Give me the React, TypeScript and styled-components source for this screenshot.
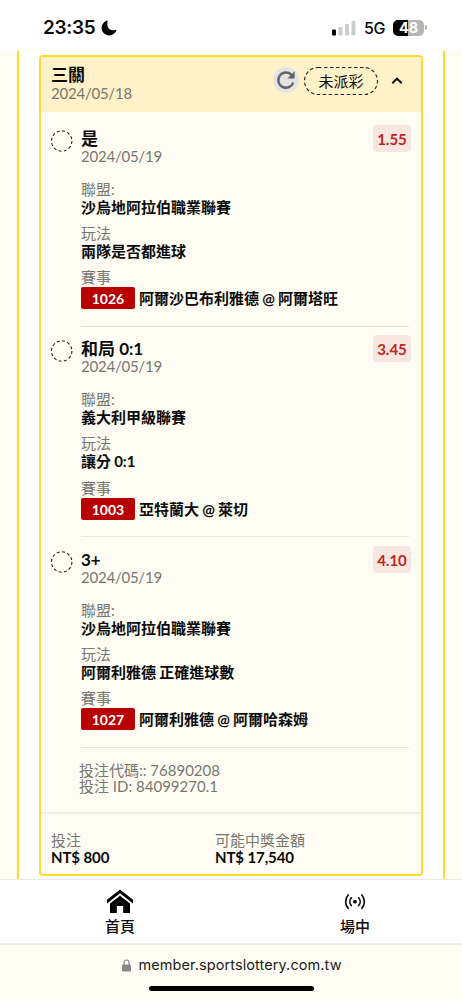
import React from 'react';
import styled, { createGlobalStyle } from 'styled-components';

const GlobalStyle = createGlobalStyle`
  * { box-sizing: border-box; }
  body {
    margin: 0;
    background: #fffdf3;
    color: #0b0b0b;
    font-family: Lato, "Noto Sans CJK TC", sans-serif;
  }
`;

const Screen = styled.div`
  width: 462px;
  height: 1000px;
  display: flex;
  flex-direction: column;
  overflow: hidden;
  background: #fffdf3;
`;

const StatusBar = styled.header`
  height: 51px;
  flex: none;
  display: flex;
  align-items: center;
  justify-content: space-between;
  padding: 4px 35px 0 43px;
  background: #fff;
  font-family: Inter, sans-serif;
`;

const StatusGroup = styled.div`
  display: flex;
  align-items: center;
`;

const Clock = styled.span`
  font-size: 19px;
  font-weight: 600;
  line-height: 25px;
  width: 58px;
  letter-spacing: -0.35px;
  white-space: nowrap;
`;

const Network = styled.span`
  font-size: 16px;
  font-weight: 500;
  width: 22px;
  margin: 1px 7px 0 8px;
  letter-spacing: -0.3px;
`;

const Battery = styled.div`
  width: 31px;
  height: 16px;
  border-radius: 5px;
  background: linear-gradient(90deg, #000 0 48%, #b5b5b5 48%);
  color: #fff;
  font-size: 14.5px;
  font-weight: 700;
  line-height: 16px;
  text-align: center;
`;

const BatteryTip = styled.i`
  width: 2px;
  height: 5px;
  margin-left: 1px;
  border-radius: 0 2px 2px 0;
  background: #b5b5b5;
`;

const Content = styled.main`
  height: 828px;
  flex: none;
  margin: 0 17px;
  padding: 4px 20px 0;
  border: solid #ffdb2e;
  border-width: 0 2px;
  background: #fff;
`;

const Card = styled.section`
  height: 821px;
  border: 2px solid #ffdb2e;
  border-radius: 4px;
  background: #fffdf3;
  overflow: hidden;
`;

const CardHeader = styled.div`
  height: 55px;
  display: flex;
  padding: 8px 18px 0 10px;
  background: #fff1c8;
`;

const CardTitle = styled.div`
  flex: 1;
`;

const Title = styled.div`
  font-size: 17px;
  font-weight: 700;
  line-height: 20px;
  white-space: nowrap;
`;

const DateText = styled.div<{ $offset?: number }>`
  margin-top: ${(p) => p.$offset ?? -1}px;
  font-size: 15px;
  line-height: 16px;
  letter-spacing: -0.23px;
  color: #777771;
`;

const Actions = styled.div`
  display: flex;
  align-items: center;
  height: 30px;
  margin-top: 1px;
`;

const Refresh = styled.button`
  width: 26px;
  height: 26px;
  padding: 0;
  border: 0;
  border-radius: 50%;
  background: #e4e4e5;
  display: grid;
  place-items: center;
  margin: -2px 5px 0 0;
`;

const StatusPill = styled.div`
  position: relative;
  width: 74px;
  height: 28px;
  display: grid;
  place-items: center;
  font-size: 15px;
  line-height: 20px;
  margin-right: 13px;
`;

const PillOutline = styled.svg`
  position: absolute;
  inset: 0;
`;

const Legs = styled.div`
  padding-top: 4px;
`;

const LegRow = styled.article`
  height: 210.5px;
  display: flex;
  padding: 12.75px 10px 0;
`;

const Marker = styled.svg`
  width: 22px;
  height: 22px;
  margin: 1px 8px 0 0;
  flex: none;
`;

const LegBody = styled.div`
  flex: 1;
  height: 197.75px;
  margin-right: -36px;
  border-bottom: 1px solid #e8e4dd;
`;

const Fields = styled.div`
  padding-top: 16px;
`;

const Field = styled.div`
  height: 44.2px;
`;

const Label = styled.div`
  margin-bottom: -2px;
  font-size: 15px;
  line-height: 19px;
  color: #777771;
`;

const Value = styled.div`
  font-size: 15px;
  font-weight: 700;
  line-height: 20px;
  word-spacing: -0.5px;
  white-space: nowrap;
`;

const Match = styled.div`
  display: flex;
  align-items: center;
  padding-top: 2px;
  gap: 4px;
`;

const MatchCode = styled.span`
  width: 54px;
  height: 22px;
  border-radius: 2px;
  background: #b80000;
  color: #fff;
  font-size: 14px;
  font-weight: 700;
  line-height: 23px;
  text-align: center;
`;

const Odds = styled.div`
  position: relative;
  width: 38px;
  height: 27px;
  margin-top: -4px;
  flex: none;
  border-radius: 4px;
  background: #f8e7e0;
  color: #c0261f;
  font-size: 15px;
  font-weight: 700;
  line-height: 28px;
  text-align: center;
`;

const Reference = styled.div`
  height: 66px;
  padding: 14px 0 0 38px;
  border-bottom: 2px solid #f1ede7;
  color: #777771;
  font-size: 15px;
  line-height: 16px;
`;

const Totals = styled.div`
  display: flex;
  padding: 17px 10px 0;
`;

const Total = styled.div<{ $width: number }>`
  width: ${(p) => p.$width}px;
`;

const Amount = styled.div`
  margin-top: 1px;
  font-size: 15px;
  font-weight: 700;
  line-height: 16px;
  letter-spacing: -0.1px;
`;

const TabBar = styled.nav`
  height: 66px;
  flex: none;
  display: flex;
  border-top: 1px solid #e8e8e8;
  border-bottom: 2px solid #ebeae6;
  background: #fff;
`;

const Tab = styled.a<{ $width: number; $left: number }>`
  width: ${(p) => p.$width}px;
  padding: 8px 0 0 ${(p) => p.$left}px;
  display: flex;
  flex-direction: column;
  align-items: center;
  font-size: 15px;
  font-weight: 500;
  line-height: 20px;

  svg { height: 28px; }
`;

const AddressBar = styled.footer`
  display: flex;
  flex-direction: column;
  align-items: center;
  padding-top: 10px;
`;

const Address = styled.div`
  display: flex;
  align-items: center;
  gap: 7px;
  margin-left: 2px;
  font-family: Inter, sans-serif;
  font-size: 14.5px;
  line-height: 20px;
  letter-spacing: 0.09px;
  color: #1c1c1c;
`;

const HomeIndicator = styled.div`
  width: 165px;
  height: 5px;
  margin-top: 11px;
  border-radius: 3px;
  background: #000;
`;

interface Leg {
  pick: string;
  odds: string;
  league: string;
  market: string;
  code: string;
  match: string;
}

const legs: Leg[] = [
  { pick: '是', odds: '1.55', league: '沙烏地阿拉伯職業聯賽', market: '兩隊是否都進球', code: '1026', match: '阿爾沙巴布利雅德 @ 阿爾塔旺' },
  { pick: '和局 0:1', odds: '3.45', league: '義大利甲級聯賽', market: '讓分 0:1', code: '1003', match: '亞特蘭大 @ 萊切' },
  { pick: '3+', odds: '4.10', league: '沙烏地阿拉伯職業聯賽', market: '阿爾利雅德 正確進球數', code: '1027', match: '阿爾利雅德 @ 阿爾哈森姆' },
];

function LegItem({ leg }: { leg: Leg }) {
  return (
    <LegRow>
      <Marker viewBox="0 0 22 22">
        <circle cx="10.700" cy="11" r="10.200" fill="none" stroke="#222" strokeWidth="1.100" strokeDasharray="3 2.340" />
      </Marker>
      <LegBody>
        <Title>{leg.pick}</Title>
        <DateText>2024/05/19</DateText>
        <Fields>
          <Field><Label>聯盟:</Label><Value>{leg.league}</Value></Field>
          <Field><Label>玩法</Label><Value>{leg.market}</Value></Field>
          <Label>賽事</Label>
          <Match><MatchCode>{leg.code}</MatchCode><Value>{leg.match}</Value></Match>
        </Fields>
      </LegBody>
      <Odds>{leg.odds}</Odds>
    </LegRow>
  );
}

export default function App() {
  return (
    <Screen>
      <GlobalStyle />
      <StatusBar>
        <StatusGroup>
          <Clock>23:35</Clock>
          <svg width="16" height="16" viewBox="0 0 16 16">
            <path d="M5.800.5C2.900 1.700.6 4.600.6 8a7.400 7.400 0 0 0 7.500 7.400c3.400 0 6.300-2.100 7.400-5.200.1-.4-.2-.6-.6-.4-.9.400-1.700.5-2.600.5-3.600 0-6-2.500-6-6 0-1.200.1-2.200.4-3.200.1-.5-.3-.8-.9-.6Z" />
          </svg>
        </StatusGroup>
        <StatusGroup>
          <svg width="24" height="16" viewBox="0 0 24 16">
            <rect x="0" y="9.500" width="4" height="6" rx="1" />
            <rect x="6.500" y="7" width="4" height="8.500" rx="1" fill="#ccc" />
            <rect x="13" y="4" width="4" height="11.500" rx="1" fill="#ccc" />
            <rect x="19.500" y="1" width="4" height="14.500" rx="1" fill="#ccc" />
          </svg>
          <Network>5G</Network>
          <Battery>48</Battery>
          <BatteryTip />
        </StatusGroup>
      </StatusBar>
      <Content>
        <Card>
          <CardHeader>
            <CardTitle>
              <Title>三關</Title>
              <DateText $offset={0}>2024/05/18</DateText>
            </CardTitle>
            <Actions>
              <Refresh aria-label="refresh">
                <svg width="20" height="20" viewBox="0 0 20 20" fill="none" stroke="#636363">
                  <path d="M15.800 5.300A7.600 7.600 0 1 0 17.200 12.500" strokeWidth="2.400" />
                  <path d="M18.600 1.200v7.200h-7.200Z" fill="#636363" stroke="none" />
                </svg>
              </Refresh>
              <StatusPill>
                <PillOutline width="74" height="28" viewBox="0 0 74 28">
                  <rect x=".5" y=".5" width="73" height="27" rx="13.500" fill="none" stroke="#222" strokeWidth="1.100" strokeDasharray="3.500 2.500" />
                </PillOutline>
                未派彩
              </StatusPill>
              <svg width="12" height="8" viewBox="0 0 12 8" fill="none" stroke="#111" strokeWidth="1.900">
                <path d="m1.300 6.300 4.700-4.600 4.700 4.600" />
              </svg>
            </Actions>
          </CardHeader>
          <Legs>
            {legs.map((leg) => <LegItem key={leg.code} leg={leg} />)}
          </Legs>
          <Reference>
            <div>投注代碼:: 76890208</div>
            <div>投注 ID: 84099270.1</div>
          </Reference>
          <Totals>
            <Total $width={164}><Label>投注</Label><Amount>NT$ 800</Amount></Total>
            <Total $width={164}><Label>可能中獎金額</Label><Amount>NT$ 17,540</Amount></Total>
          </Totals>
        </Card>
      </Content>
      <TabBar>
        <Tab $width={231} $left={9}>
          <svg width="28" height="28" viewBox="0 0 28 28">
            <path d="M14 1.500 1 11.800v3.600L14 5.300l13 10.100v-3.600Z" />
            <path d="M14 7.800 4 15.500V25h6.800v-7h6.400v7H24v-9.500Z" />
          </svg>
          首頁
        </Tab>
        <Tab $width={231} $left={17}>
          <svg width="22" height="28" viewBox="0 0 22 28" fill="none" stroke="#111" strokeWidth="1.700" strokeLinecap="round">
            <circle cx="11" cy="13.700" r="1.900" fill="#111" stroke="none" />
            <path d="M7.300 9.900a5.700 5.700 0 0 0 0 7.600M14.700 9.900a5.700 5.700 0 0 1 0 7.600M4.200 7c-3.400 4-3.400 9.400 0 13.400M17.800 7c3.400 4 3.400 9.400 0 13.400" />
          </svg>
          場中
        </Tab>
      </TabBar>
      <AddressBar>
        <Address>
          <svg width="9" height="13" viewBox="0 0 9 13">
            <path d="M2 6V3.500a2.500 2.500 0 0 1 5 0V6" fill="none" stroke="#888" strokeWidth="1.200" />
            <rect y="5.500" width="9" height="7" rx="1.200" fill="#888" />
          </svg>
          member.sportslottery.com.tw
        </Address>
        <HomeIndicator />
      </AddressBar>
    </Screen>
  );
}
